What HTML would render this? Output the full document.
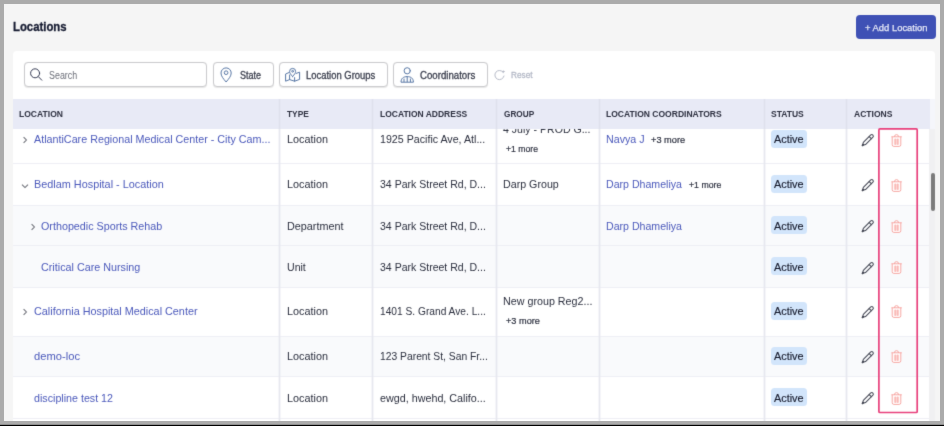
<!DOCTYPE html>
<html>
<head>
<meta charset="utf-8">
<title>Locations</title>
<style>
*{box-sizing:border-box;margin:0;padding:0}
html,body{width:944px;height:426px;overflow:hidden;background:#ababab;font-family:"Liberation Sans",sans-serif;}
#frame{position:absolute;left:0;top:0;width:944px;height:426px;background:#ababab;overflow:hidden}
#darkline{position:absolute;left:0;top:424px;width:944px;height:2px;background:linear-gradient(to bottom,#8f8f8f 0,#8f8f8f 50%,#000 50%,#000 100%)}
#page{filter:url(#bl);position:absolute;left:4px;top:4px;width:936px;height:417px;background:#f5f5f5;overflow:hidden}
#w{position:absolute;left:-4px;top:-4px;width:944px;height:426px;will-change:transform}
.abs{position:absolute}
.t{position:absolute;white-space:nowrap}
#addbtn{left:855.5px;top:15px;width:80.5px;height:24px;background:#3f51b5;border-radius:4px}
#card{left:13px;top:51px;width:922px;height:380px;background:#fff;border-radius:4px 4px 0 0}
.ctl{position:absolute;top:62px;height:25px;border:1px solid #cbcbce;border-radius:4px;background:#fff;box-shadow:0 0.5px 1px rgba(0,0,0,0.10)}
#thead{left:13px;top:99px;width:916.5px;height:29.5px;background:#e8eaf6}
#hstrip{left:929.5px;top:99px;width:5.5px;height:29.5px;background:#f5f6fb}
.vline{position:absolute;width:1px;background:#e7e8ef;top:128px;height:300px;box-shadow:-1px 0 0 rgba(231,232,239,0.4),1px 0 0 rgba(231,232,239,0.4)}
.vlineh{position:absolute;width:1px;background:#dfe1ed;top:99px;height:29.5px;box-shadow:-1px 0 0 rgba(223,225,237,0.3),1px 0 0 rgba(223,225,237,0.3)}
.row{position:absolute;left:13px;width:916px;background:#fff}
.hline{position:absolute;left:13px;width:916px;height:1px;background:#eeeff5}
.row.alt{background:#f9fafc}
.badge{position:absolute;left:770.5px;width:36px;height:18px;background:#d2e5fb;border-radius:3.5px}
#pink{left:878px;top:128px;width:40px;height:285px;border:1.8px solid #e8407c;border-radius:1px}
#strack{left:929px;top:128.5px;width:6px;height:300px;background:#f0f0f2}
#sthumb{left:930.6px;top:172.6px;width:4.6px;height:38.4px;background:#7b7b7b;border-radius:2.3px}
</style>
</head>
<body>
<svg width="0" height="0" style="position:absolute"><defs><filter id="bl" x="0" y="0" width="100%" height="100%" color-interpolation-filters="sRGB"><feConvolveMatrix order="3" kernelMatrix="0.01134 0.08382 0.01134 0.08382 0.61935 0.08382 0.01134 0.08382 0.01134" edgeMode="duplicate" preserveAlpha="false"/></filter></defs></svg>
<div id="frame">
<div id="page"><div id="w">
  <!--TITLE_BG-->
  <div id="addbtn" class="abs"></div>
  <div class="t" style="left:13.2px;top:20.00px;font-size:12.3px;line-height:14px;font-weight:bold;color:#161b31;transform:scaleX(0.9229);transform-origin:0 0;-webkit-text-stroke:0.3px #161b31;">Locations</div>
<div class="t" style="left:864.7px;top:22.00px;font-size:9.4px;line-height:11px;font-weight:normal;color:#e6e9f7;transform:scaleX(1.0033);transform-origin:0 0;-webkit-text-stroke:0.25px #e6e9f7;">+ Add Location</div>
  <div id="card" class="abs"></div>

  <!-- toolbar -->
  <div class="ctl" style="left:24px;width:182.5px"></div>
  <div class="ctl" style="left:212.5px;width:61px"></div>
  <div class="ctl" style="left:278.8px;width:109px"></div>
  <div class="ctl" style="left:392.8px;width:95px"></div>
  <!-- search icon -->
  <svg class="abs" style="left:28px;top:66px" width="16" height="16" viewBox="0 0 16 16" fill="none" stroke="#353b54" stroke-width="1" stroke-linecap="round"><circle cx="7.1" cy="7.3" r="4.5"/><path d="M10.4 10.7 L13.8 14.2"/></svg>
  <!-- pin icon -->
  <svg class="abs" style="left:218px;top:66px" width="16" height="18" viewBox="0 0 16 18" fill="none" stroke="#5978a6" stroke-width="1" stroke-linejoin="round"><path d="M8.1 16 C5.2 12.6 3 10 3 7 A5.1 5.1 0 0 1 13.2 7 C13.2 10 11 12.6 8.1 16 Z"/><circle cx="8.1" cy="6.7" r="1.85"/></svg>
  <!-- map icon -->
  <svg class="abs" style="left:284px;top:66px" width="18" height="17" viewBox="0 0 18 17" fill="none" stroke="#5978a6" stroke-width="1" stroke-linejoin="round" stroke-linecap="round"><path d="M5.3 6.4 L1.6 8 V15.2 L5.6 13.6 L10.6 15.2 L15.6 13.4 V6.2 L12.2 7.4"/><path d="M5.6 9 V13.6 M10.6 11.6 V15.2"/><path d="M8.6 10.6 C6.6 8.2 5.6 7 5.6 5.4 A3 3 0 0 1 11.6 5.4 C11.6 7 10.6 8.2 8.6 10.6 Z"/><circle cx="8.6" cy="5.3" r="0.9"/></svg>
  <!-- person icon -->
  <svg class="abs" style="left:399px;top:66px" width="17" height="18" viewBox="0 0 17 18" fill="none" stroke="#5978a6" stroke-width="1" stroke-linejoin="round" stroke-linecap="round"><circle cx="8.2" cy="4.8" r="3.1"/><path d="M2 15.8 C2 12.4 4.4 10.6 8.2 10.6 C12 10.6 14.4 12.4 14.4 15.8 Z"/><path d="M8.2 10.8 V15.6 M5 13 V15.6 M11.4 13 V15.6"/></svg>
  <!-- reset icon -->
  <svg class="abs" style="left:493px;top:69px" width="13" height="12" viewBox="0 0 13 12" fill="none" stroke="#b7bbc8" stroke-width="1" stroke-linecap="round"><path d="M10.2 3.3 A4.6 4.6 0 1 0 11 7"/><circle cx="10.3" cy="2.6" r="0.7" fill="#b7bbc8"/></svg>
  <div class="t" style="left:49px;top:70.00px;font-size:10px;line-height:11px;font-weight:normal;color:#6b6e78;transform:scaleX(0.8899);transform-origin:0 0;">Search</div>
<div class="t" style="left:239.6px;top:70.00px;font-size:10.2px;line-height:11px;font-weight:normal;color:#3a3e4d;transform:scaleX(0.8867);transform-origin:0 0;-webkit-text-stroke:0.3px #3a3e4d;">State</div>
<div class="t" style="left:306.1px;top:70.00px;font-size:10.2px;line-height:11px;font-weight:normal;color:#3a3e4d;transform:scaleX(0.9269);transform-origin:0 0;-webkit-text-stroke:0.3px #3a3e4d;">Location Groups</div>
<div class="t" style="left:420.1px;top:70.00px;font-size:10.2px;line-height:11px;font-weight:normal;color:#3a3e4d;transform:scaleX(0.9464);transform-origin:0 0;-webkit-text-stroke:0.3px #3a3e4d;">Coordinators</div>
<div class="t" style="left:511.3px;top:70.00px;font-size:9.3px;line-height:10px;font-weight:normal;color:#b3b8c6;transform:scaleX(0.8849);transform-origin:0 0;-webkit-text-stroke:0.3px #b3b8c6;">Reset</div>

  <!-- header -->
  <div id="thead" class="abs"></div>
  <div id="hstrip" class="abs"></div>
  <div class="t" style="left:19px;top:108.00px;font-size:9.6px;line-height:11px;font-weight:bold;color:#2d3040;transform:scaleX(0.8909);transform-origin:0 0;">LOCATION</div>
<div class="t" style="left:287.2px;top:108.00px;font-size:9.6px;line-height:11px;font-weight:bold;color:#2d3040;transform:scaleX(0.8698);transform-origin:0 0;">TYPE</div>
<div class="t" style="left:380px;top:108.00px;font-size:9.6px;line-height:11px;font-weight:bold;color:#2d3040;transform:scaleX(0.8843);transform-origin:0 0;">LOCATION ADDRESS</div>
<div class="t" style="left:503.5px;top:108.00px;font-size:9.6px;line-height:11px;font-weight:bold;color:#2d3040;transform:scaleX(0.8583);transform-origin:0 0;">GROUP</div>
<div class="t" style="left:606.4px;top:108.00px;font-size:9.6px;line-height:11px;font-weight:bold;color:#2d3040;transform:scaleX(0.8897);transform-origin:0 0;">LOCATION COORDINATORS</div>
<div class="t" style="left:771.4px;top:108.00px;font-size:9.6px;line-height:11px;font-weight:bold;color:#2d3040;transform:scaleX(0.8876);transform-origin:0 0;">STATUS</div>
<div class="t" style="left:854px;top:108.00px;font-size:9.6px;line-height:11px;font-weight:bold;color:#2d3040;transform:scaleX(0.8895);transform-origin:0 0;">ACTIONS</div>

  <!-- rows -->
  <div id="rows" class="abs" style="left:0;top:128.5px;width:944px;height:300px;overflow:hidden"><div class="abs" style="left:0;top:-128.5px;width:944px;height:600px">
<div class="row" style="top:115px;height:49px"></div>
<svg class="abs" style="left:21.4px;top:135.1px" width="8" height="10" viewBox="0 0 8 10" fill="none" stroke="#6c6e76" stroke-width="1.05"><path d="M2.6 2.2 L5.4 5 L2.6 7.8"/></svg>
<div class="t" style="left:33.7px;top:133.00px;font-size:11px;line-height:12px;font-weight:normal;color:#4b59bb;transform:scaleX(0.9769);transform-origin:0 0;">AtlantiCare Regional Medical Center - City Cam...</div>
<div class="t" style="left:287.2px;top:133.00px;font-size:11px;line-height:12px;font-weight:normal;color:#2b2f3e;transform:scaleX(0.9857);transform-origin:0 0;">Location</div>
<div class="t" style="left:379.9px;top:133.00px;font-size:11px;line-height:12px;font-weight:normal;color:#2b2f3e;transform:scaleX(0.9691);transform-origin:0 0;">1925 Pacific Ave, Atl...</div>
<div class="t" style="left:503px;top:123.00px;font-size:11px;line-height:12px;font-weight:normal;color:#2b2f3e;transform:scaleX(0.9607);transform-origin:0 0;">4 July - PROD G...</div>
<div class="t" style="left:506.4px;top:144.00px;font-size:9.3px;line-height:10px;font-weight:normal;color:#2b2f3e;transform:scaleX(0.9309);transform-origin:0 0;-webkit-text-stroke:0.2px #2b2f3e;">+1 more</div>
<div class="t" style="left:606.2px;top:133.00px;font-size:11px;line-height:12px;font-weight:normal;color:#4b59bb;transform:scaleX(0.9711);transform-origin:0 0;">Navya J</div>
<div class="t" style="left:651.2px;top:135.00px;font-size:9.3px;line-height:10px;font-weight:normal;color:#2b2f3e;transform:scaleX(0.9920);transform-origin:0 0;-webkit-text-stroke:0.2px #2b2f3e;">+3 more</div>
<div class="badge" style="top:129.90px"></div>
<div class="t" style="left:774px;top:133.00px;font-size:11px;line-height:12px;font-weight:normal;color:#161a2c;transform:scaleX(0.9877);transform-origin:0 0;-webkit-text-stroke:0.15px #161a2c;">Active</div>
<svg class="abs" style="left:861px;top:133.0px" width="14" height="14" viewBox="0 0 14 14" fill="none" stroke="#454855" stroke-width="1.05" stroke-linejoin="round" stroke-linecap="round"><path d="M1.3 12.6 L2.36 9.42 L9.79 1.99 A1.5 1.5 0 0 1 11.91 4.11 L4.48 11.54 Z"/><path d="M8.2 3.6 L10.3 5.7"/><path d="M1.5 12.4 L2.3 11.6" stroke-width="1.6"/></svg>
<svg class="abs" style="left:891.4px;top:133.5px" width="11" height="13" viewBox="0 0 11 13" fill="none" stroke="#f7a8a4" stroke-width="1" stroke-linecap="round" stroke-linejoin="round"><path d="M3.4 2.6 Q3.4 0.6 5.5 0.6 Q7.6 0.6 7.6 2.6"/><path d="M1.2 3 V10.8 Q1.2 12.4 2.9 12.4 H8.1 Q9.8 12.4 9.8 10.8 V3" fill="#fff"/><path d="M0.8 2.8 H10.4"/><rect x="2.9" y="4.9" width="5.2" height="5.7" fill="#fcd6d4" stroke="none"/><path d="M4.25 4.9 V10.6 M6.75 4.9 V10.6" stroke-width="0.8"/></svg>
<div class="row" style="top:163px;height:43px"></div>
<svg class="abs" style="left:20.0px;top:181.7px" width="10" height="8" viewBox="0 0 10 8" fill="none" stroke="#6c6e76" stroke-width="1.05"><path d="M2 2.6 L5 5.6 L8 2.6"/></svg>
<div class="t" style="left:33.7px;top:178.00px;font-size:11px;line-height:12px;font-weight:normal;color:#4b59bb;transform:scaleX(0.9873);transform-origin:0 0;">Bedlam Hospital - Location</div>
<div class="t" style="left:287.2px;top:178.00px;font-size:11px;line-height:12px;font-weight:normal;color:#2b2f3e;transform:scaleX(0.9857);transform-origin:0 0;">Location</div>
<div class="t" style="left:379.9px;top:178.00px;font-size:11px;line-height:12px;font-weight:normal;color:#2b2f3e;transform:scaleX(0.9570);transform-origin:0 0;">34 Park Street Rd, D...</div>
<div class="t" style="left:503px;top:178.00px;font-size:11px;line-height:12px;font-weight:normal;color:#2b2f3e;transform:scaleX(0.9707);transform-origin:0 0;">Darp Group</div>
<div class="t" style="left:606.2px;top:178.00px;font-size:11px;line-height:12px;font-weight:normal;color:#4b59bb;transform:scaleX(0.9635);transform-origin:0 0;">Darp Dhameliya</div>
<div class="t" style="left:688.9px;top:180.00px;font-size:9.3px;line-height:10px;font-weight:normal;color:#2b2f3e;transform:scaleX(0.9396);transform-origin:0 0;-webkit-text-stroke:0.2px #2b2f3e;">+1 more</div>
<div class="badge" style="top:174.90px"></div>
<div class="t" style="left:774px;top:178.00px;font-size:11px;line-height:12px;font-weight:normal;color:#161a2c;transform:scaleX(0.9877);transform-origin:0 0;-webkit-text-stroke:0.15px #161a2c;">Active</div>
<svg class="abs" style="left:861px;top:178.0px" width="14" height="14" viewBox="0 0 14 14" fill="none" stroke="#454855" stroke-width="1.05" stroke-linejoin="round" stroke-linecap="round"><path d="M1.3 12.6 L2.36 9.42 L9.79 1.99 A1.5 1.5 0 0 1 11.91 4.11 L4.48 11.54 Z"/><path d="M8.2 3.6 L10.3 5.7"/><path d="M1.5 12.4 L2.3 11.6" stroke-width="1.6"/></svg>
<svg class="abs" style="left:891.4px;top:178.5px" width="11" height="13" viewBox="0 0 11 13" fill="none" stroke="#f7a8a4" stroke-width="1" stroke-linecap="round" stroke-linejoin="round"><path d="M3.4 2.6 Q3.4 0.6 5.5 0.6 Q7.6 0.6 7.6 2.6"/><path d="M1.2 3 V10.8 Q1.2 12.4 2.9 12.4 H8.1 Q9.8 12.4 9.8 10.8 V3" fill="#fff"/><path d="M0.8 2.8 H10.4"/><rect x="2.9" y="4.9" width="5.2" height="5.7" fill="#fcd6d4" stroke="none"/><path d="M4.25 4.9 V10.6 M6.75 4.9 V10.6" stroke-width="0.8"/></svg>
<div class="row alt" style="top:205px;height:41px"></div>
<svg class="abs" style="left:28.9px;top:221.5px" width="8" height="10" viewBox="0 0 8 10" fill="none" stroke="#6c6e76" stroke-width="1.05"><path d="M2.6 2.2 L5.4 5 L2.6 7.8"/></svg>
<div class="t" style="left:41.0px;top:220.00px;font-size:11px;line-height:12px;font-weight:normal;color:#4b59bb;transform:scaleX(0.9771);transform-origin:0 0;">Orthopedic Sports Rehab</div>
<div class="t" style="left:287.2px;top:220.00px;font-size:11px;line-height:12px;font-weight:normal;color:#2b2f3e;transform:scaleX(0.9811);transform-origin:0 0;">Department</div>
<div class="t" style="left:379.9px;top:220.00px;font-size:11px;line-height:12px;font-weight:normal;color:#2b2f3e;transform:scaleX(0.9570);transform-origin:0 0;">34 Park Street Rd, D...</div>
<div class="t" style="left:606.2px;top:220.00px;font-size:11px;line-height:12px;font-weight:normal;color:#4b59bb;transform:scaleX(0.9635);transform-origin:0 0;">Darp Dhameliya</div>
<div class="badge" style="top:216.30px"></div>
<div class="t" style="left:774px;top:220.00px;font-size:11px;line-height:12px;font-weight:normal;color:#161a2c;transform:scaleX(0.9877);transform-origin:0 0;-webkit-text-stroke:0.15px #161a2c;">Active</div>
<svg class="abs" style="left:861px;top:219.4px" width="14" height="14" viewBox="0 0 14 14" fill="none" stroke="#454855" stroke-width="1.05" stroke-linejoin="round" stroke-linecap="round"><path d="M1.3 12.6 L2.36 9.42 L9.79 1.99 A1.5 1.5 0 0 1 11.91 4.11 L4.48 11.54 Z"/><path d="M8.2 3.6 L10.3 5.7"/><path d="M1.5 12.4 L2.3 11.6" stroke-width="1.6"/></svg>
<svg class="abs" style="left:891.4px;top:219.9px" width="11" height="13" viewBox="0 0 11 13" fill="none" stroke="#f7a8a4" stroke-width="1" stroke-linecap="round" stroke-linejoin="round"><path d="M3.4 2.6 Q3.4 0.6 5.5 0.6 Q7.6 0.6 7.6 2.6"/><path d="M1.2 3 V10.8 Q1.2 12.4 2.9 12.4 H8.1 Q9.8 12.4 9.8 10.8 V3" fill="#fff"/><path d="M0.8 2.8 H10.4"/><rect x="2.9" y="4.9" width="5.2" height="5.7" fill="#fcd6d4" stroke="none"/><path d="M4.25 4.9 V10.6 M6.75 4.9 V10.6" stroke-width="0.8"/></svg>
<div class="row alt" style="top:245px;height:43px"></div>
<div class="t" style="left:41.0px;top:261.00px;font-size:11px;line-height:12px;font-weight:normal;color:#4b59bb;transform:scaleX(0.9785);transform-origin:0 0;">Critical Care Nursing</div>
<div class="t" style="left:287.2px;top:261.00px;font-size:11px;line-height:12px;font-weight:normal;color:#2b2f3e;transform:scaleX(0.9610);transform-origin:0 0;">Unit</div>
<div class="t" style="left:379.9px;top:261.00px;font-size:11px;line-height:12px;font-weight:normal;color:#2b2f3e;transform:scaleX(0.9570);transform-origin:0 0;">34 Park Street Rd, D...</div>
<div class="badge" style="top:257.40px"></div>
<div class="t" style="left:774px;top:261.00px;font-size:11px;line-height:12px;font-weight:normal;color:#161a2c;transform:scaleX(0.9877);transform-origin:0 0;-webkit-text-stroke:0.15px #161a2c;">Active</div>
<svg class="abs" style="left:861px;top:260.5px" width="14" height="14" viewBox="0 0 14 14" fill="none" stroke="#454855" stroke-width="1.05" stroke-linejoin="round" stroke-linecap="round"><path d="M1.3 12.6 L2.36 9.42 L9.79 1.99 A1.5 1.5 0 0 1 11.91 4.11 L4.48 11.54 Z"/><path d="M8.2 3.6 L10.3 5.7"/><path d="M1.5 12.4 L2.3 11.6" stroke-width="1.6"/></svg>
<svg class="abs" style="left:891.4px;top:261.0px" width="11" height="13" viewBox="0 0 11 13" fill="none" stroke="#f7a8a4" stroke-width="1" stroke-linecap="round" stroke-linejoin="round"><path d="M3.4 2.6 Q3.4 0.6 5.5 0.6 Q7.6 0.6 7.6 2.6"/><path d="M1.2 3 V10.8 Q1.2 12.4 2.9 12.4 H8.1 Q9.8 12.4 9.8 10.8 V3" fill="#fff"/><path d="M0.8 2.8 H10.4"/><rect x="2.9" y="4.9" width="5.2" height="5.7" fill="#fcd6d4" stroke="none"/><path d="M4.25 4.9 V10.6 M6.75 4.9 V10.6" stroke-width="0.8"/></svg>
<div class="row" style="top:287px;height:50px"></div>
<svg class="abs" style="left:21.4px;top:306.70000000000005px" width="8" height="10" viewBox="0 0 8 10" fill="none" stroke="#6c6e76" stroke-width="1.05"><path d="M2.6 2.2 L5.4 5 L2.6 7.8"/></svg>
<div class="t" style="left:33.7px;top:305.00px;font-size:11px;line-height:12px;font-weight:normal;color:#4b59bb;transform:scaleX(0.9832);transform-origin:0 0;">California Hospital Medical Center</div>
<div class="t" style="left:287.2px;top:305.00px;font-size:11px;line-height:12px;font-weight:normal;color:#2b2f3e;transform:scaleX(0.9857);transform-origin:0 0;">Location</div>
<div class="t" style="left:379.9px;top:305.00px;font-size:11px;line-height:12px;font-weight:normal;color:#2b2f3e;transform:scaleX(0.9268);transform-origin:0 0;">1401 S. Grand Ave. L...</div>
<div class="t" style="left:503px;top:295.00px;font-size:11px;line-height:12px;font-weight:normal;color:#2b2f3e;transform:scaleX(0.9747);transform-origin:0 0;">New group Reg2...</div>
<div class="t" style="left:506.4px;top:316.00px;font-size:9.3px;line-height:10px;font-weight:normal;color:#2b2f3e;transform:scaleX(0.9862);transform-origin:0 0;-webkit-text-stroke:0.2px #2b2f3e;">+3 more</div>
<div class="badge" style="top:301.50px"></div>
<div class="t" style="left:774px;top:305.00px;font-size:11px;line-height:12px;font-weight:normal;color:#161a2c;transform:scaleX(0.9877);transform-origin:0 0;-webkit-text-stroke:0.15px #161a2c;">Active</div>
<svg class="abs" style="left:861px;top:304.6px" width="14" height="14" viewBox="0 0 14 14" fill="none" stroke="#454855" stroke-width="1.05" stroke-linejoin="round" stroke-linecap="round"><path d="M1.3 12.6 L2.36 9.42 L9.79 1.99 A1.5 1.5 0 0 1 11.91 4.11 L4.48 11.54 Z"/><path d="M8.2 3.6 L10.3 5.7"/><path d="M1.5 12.4 L2.3 11.6" stroke-width="1.6"/></svg>
<svg class="abs" style="left:891.4px;top:305.1px" width="11" height="13" viewBox="0 0 11 13" fill="none" stroke="#f7a8a4" stroke-width="1" stroke-linecap="round" stroke-linejoin="round"><path d="M3.4 2.6 Q3.4 0.6 5.5 0.6 Q7.6 0.6 7.6 2.6"/><path d="M1.2 3 V10.8 Q1.2 12.4 2.9 12.4 H8.1 Q9.8 12.4 9.8 10.8 V3" fill="#fff"/><path d="M0.8 2.8 H10.4"/><rect x="2.9" y="4.9" width="5.2" height="5.7" fill="#fcd6d4" stroke="none"/><path d="M4.25 4.9 V10.6 M6.75 4.9 V10.6" stroke-width="0.8"/></svg>
<div class="row alt" style="top:336px;height:41px"></div>
<div class="t" style="left:33.7px;top:350.00px;font-size:11px;line-height:12px;font-weight:normal;color:#4b59bb;transform:scaleX(1.0166);transform-origin:0 0;">demo-loc</div>
<div class="t" style="left:287.2px;top:350.00px;font-size:11px;line-height:12px;font-weight:normal;color:#2b2f3e;transform:scaleX(0.9857);transform-origin:0 0;">Location</div>
<div class="t" style="left:379.9px;top:350.00px;font-size:11px;line-height:12px;font-weight:normal;color:#2b2f3e;transform:scaleX(0.9378);transform-origin:0 0;">123 Parent St, San Fr...</div>
<div class="badge" style="top:346.80px"></div>
<div class="t" style="left:774px;top:350.00px;font-size:11px;line-height:12px;font-weight:normal;color:#161a2c;transform:scaleX(0.9877);transform-origin:0 0;-webkit-text-stroke:0.15px #161a2c;">Active</div>
<svg class="abs" style="left:861px;top:349.90000000000003px" width="14" height="14" viewBox="0 0 14 14" fill="none" stroke="#454855" stroke-width="1.05" stroke-linejoin="round" stroke-linecap="round"><path d="M1.3 12.6 L2.36 9.42 L9.79 1.99 A1.5 1.5 0 0 1 11.91 4.11 L4.48 11.54 Z"/><path d="M8.2 3.6 L10.3 5.7"/><path d="M1.5 12.4 L2.3 11.6" stroke-width="1.6"/></svg>
<svg class="abs" style="left:891.4px;top:350.40000000000003px" width="11" height="13" viewBox="0 0 11 13" fill="none" stroke="#f7a8a4" stroke-width="1" stroke-linecap="round" stroke-linejoin="round"><path d="M3.4 2.6 Q3.4 0.6 5.5 0.6 Q7.6 0.6 7.6 2.6"/><path d="M1.2 3 V10.8 Q1.2 12.4 2.9 12.4 H8.1 Q9.8 12.4 9.8 10.8 V3" fill="#fff"/><path d="M0.8 2.8 H10.4"/><rect x="2.9" y="4.9" width="5.2" height="5.7" fill="#fcd6d4" stroke="none"/><path d="M4.25 4.9 V10.6 M6.75 4.9 V10.6" stroke-width="0.8"/></svg>
<div class="row" style="top:376px;height:43px"></div>
<div class="t" style="left:33.7px;top:392.00px;font-size:11px;line-height:12px;font-weight:normal;color:#4b59bb;transform:scaleX(0.9714);transform-origin:0 0;">discipline test 12</div>
<div class="t" style="left:287.2px;top:392.00px;font-size:11px;line-height:12px;font-weight:normal;color:#2b2f3e;transform:scaleX(0.9857);transform-origin:0 0;">Location</div>
<div class="t" style="left:379.9px;top:392.00px;font-size:11px;line-height:12px;font-weight:normal;color:#2b2f3e;transform:scaleX(0.9775);transform-origin:0 0;">ewgd, hwehd, Califo...</div>
<div class="badge" style="top:388.10px"></div>
<div class="t" style="left:774px;top:392.00px;font-size:11px;line-height:12px;font-weight:normal;color:#161a2c;transform:scaleX(0.9877);transform-origin:0 0;-webkit-text-stroke:0.15px #161a2c;">Active</div>
<svg class="abs" style="left:861px;top:391.20000000000005px" width="14" height="14" viewBox="0 0 14 14" fill="none" stroke="#454855" stroke-width="1.05" stroke-linejoin="round" stroke-linecap="round"><path d="M1.3 12.6 L2.36 9.42 L9.79 1.99 A1.5 1.5 0 0 1 11.91 4.11 L4.48 11.54 Z"/><path d="M8.2 3.6 L10.3 5.7"/><path d="M1.5 12.4 L2.3 11.6" stroke-width="1.6"/></svg>
<svg class="abs" style="left:891.4px;top:391.70000000000005px" width="11" height="13" viewBox="0 0 11 13" fill="none" stroke="#f7a8a4" stroke-width="1" stroke-linecap="round" stroke-linejoin="round"><path d="M3.4 2.6 Q3.4 0.6 5.5 0.6 Q7.6 0.6 7.6 2.6"/><path d="M1.2 3 V10.8 Q1.2 12.4 2.9 12.4 H8.1 Q9.8 12.4 9.8 10.8 V3" fill="#fff"/><path d="M0.8 2.8 H10.4"/><rect x="2.9" y="4.9" width="5.2" height="5.7" fill="#fcd6d4" stroke="none"/><path d="M4.25 4.9 V10.6 M6.75 4.9 V10.6" stroke-width="0.8"/></svg>
<div class="row" style="top:418px;height:43px"></div>
<div class="hline" style="top:163px"></div>
<div class="hline" style="top:205px"></div>
<div class="hline" style="top:245px"></div>
<div class="hline" style="top:287px"></div>
<div class="hline" style="top:336px"></div>
<div class="hline" style="top:376px"></div>
<div class="hline" style="top:418px"></div>
<div class="hline" style="top:460px"></div>
  </div></div>
<div class="vline" style="left:279px"></div><div class="vlineh" style="left:279px"></div>
<div class="vline" style="left:372px"></div><div class="vlineh" style="left:372px"></div>
<div class="vline" style="left:496px"></div><div class="vlineh" style="left:496px"></div>
<div class="vline" style="left:599px"></div><div class="vlineh" style="left:599px"></div>
<div class="vline" style="left:764px"></div><div class="vlineh" style="left:764px"></div>
<div class="vline" style="left:846px"></div><div class="vlineh" style="left:846px"></div>
  <div id="strack" class="abs"></div>
  <div id="sthumb" class="abs"></div>
  <svg class="abs" style="left:876px;top:126px" width="44" height="290" viewBox="0 0 44 290" fill="none"><rect x="2.9" y="2.9" width="38.3" height="283.6" rx="1" stroke="#e8407c" stroke-width="1.7"/></svg>
</div></div>
<div id="darkline"></div>
</div>
</body>
</html>
